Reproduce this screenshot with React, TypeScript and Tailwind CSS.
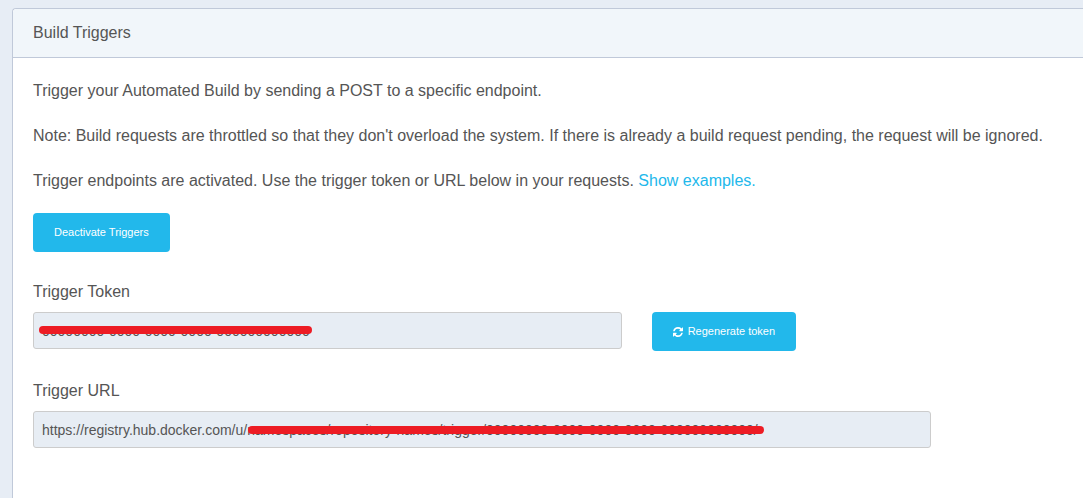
import type { ReactNode } from "react";

const TOKEN = "00000000-0000-0000-0000-000000000000";
const URL_VALUE = `https://registry.hub.docker.com/u/namespaces/repository-names/trigger/${TOKEN}/`;

function RefreshIcon() {
  return (
    <svg viewBox="0 0 1536 1536" className="size-[10px]" fill="currentColor" aria-hidden="true">
      <path d="M1511 928q0 5-1 7-64 268-268 434.500t-478 166.500q-146 0-282.500-55t-243.500-157l-129 129q-19 19-45 19t-45-19-19-45v-448q0-26 19-45t45-19h448q26 0 45 19t19 45-19 45l-137 137q71 66 161 102t187 36q134 0 250-65t186-179q11-17 53-117 8-23 30-23h192q13 0 22.500 9.500t9.500 22.500zm25-800v448q0 26-19 45t-45 19h-448q-26 0-45-19t-19-45 19-45l138-138q-148-137-349-137-134 0-250 65t-186 179q-11 17-53 117-8 23-30 23h-199q-13 0-22.500-9.500t-9.500-22.500v-7q65-268 270-434.500t480-166.500q146 0 284 55.500t245 156.500l130-129q19-19 45-19t45 19 19 45z" />
    </svg>
  );
}

function ActionButton({ children }: { children: ReactNode }) {
  return (
    <button
      type="button"
      className="inline-flex h-[39px] items-center gap-[5px] rounded bg-[#22b8eb] px-[21px] text-[11px] whitespace-nowrap text-white"
    >
      {children}
    </button>
  );
}

function ReadOnlyField({ id, value, children }: { id: string; value: string; children: ReactNode }) {
  return (
    <div className="relative">
      <input
        id={id}
        type="text"
        readOnly
        value={value}
        className="block h-[37px] w-full rounded-[3px] border border-[#cccccc] bg-[#e7edf4] px-2 text-sm text-[#555555] outline-none"
      />
      {children}
    </div>
  );
}

export default function App() {
  return (
    <div className="min-h-screen overflow-x-hidden bg-[#e7edf5] pt-2 pl-3 font-['Liberation_Sans',Arial,sans-serif] text-base leading-[25px] text-[#555555]">
      <section className="flex min-h-[calc(100vh-8px)] flex-col rounded-tl border-t border-l border-[#c0c9d9] bg-white">
        <header className="rounded-tl border-b border-[#c0c9d9] bg-[#f1f6fa] px-5 pt-[11px] pb-3">
          <h2>Build Triggers</h2>
        </header>
        <div className="px-5 py-5">
          <div className="flex flex-col gap-5">
            <p>Trigger your Automated Build by sending a POST to a specific endpoint.</p>
            <p>
              Note: Build requests are throttled so that they don't overload the system. If there is already a build
              request pending, the request will be ignored.
            </p>
            <p>
              Trigger endpoints are activated. Use the trigger token or URL below in your requests.{" "}
              <a href="#examples" className="text-[#22b8eb]">
                Show examples.
              </a>
            </p>
            <div className="flex">
              <ActionButton>Deactivate Triggers</ActionButton>
            </div>
          </div>
          <form className="max-w-[898px]">
            <label htmlFor="trigger-token" className="mt-[27px] mb-2 block">
              Trigger Token
            </label>
            <div className="grid grid-cols-3 gap-[30px]">
              <div className="col-span-2">
                <ReadOnlyField id="trigger-token" value={TOKEN}>
                  <span className="absolute top-[14px] left-[6px] h-2 w-[273px] rounded-full bg-[#ed1c24]" />
                </ReadOnlyField>
              </div>
              <div className="flex">
                <ActionButton>
                  <RefreshIcon />
                  Regenerate token
                </ActionButton>
              </div>
            </div>
            <label htmlFor="trigger-url" className="mt-[27px] mb-2 block">
              Trigger URL
            </label>
            <ReadOnlyField id="trigger-url" value={URL_VALUE}>
              <span className="absolute top-[15px] left-[215px] h-2 w-[516px] rounded-full bg-[#ed1c24]" />
            </ReadOnlyField>
          </form>
        </div>
      </section>
    </div>
  );
}
